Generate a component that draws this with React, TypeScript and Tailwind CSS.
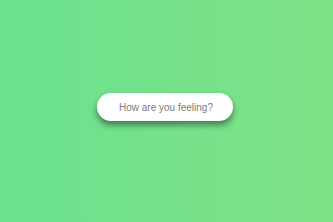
export default function App() {
  return (
    <div className="flex h-[222px] w-full items-center justify-center bg-gradient-to-r from-[#6be18f] to-[#7fe287] pb-[8px] pr-[3px] font-['Liberation_Sans',Arial,sans-serif]">
      <button className="flex h-[28px] w-[136px] items-center justify-center rounded-full bg-white pl-[2px] text-[10px] text-[#7a7a7a] shadow-[0_4px_6px_rgba(0,0,0,0.45)]">
        How are you feeling?
      </button>
    </div>
  );
}
